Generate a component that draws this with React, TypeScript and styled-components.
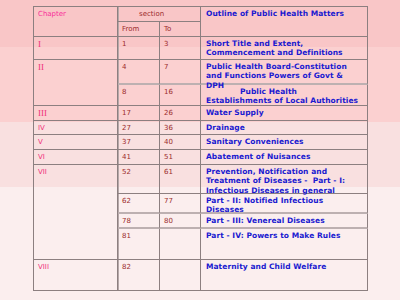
import React from "react";
import styled, { createGlobalStyle } from "styled-components";

const GlobalStyle = createGlobalStyle`
	html, body {
		margin: 0;
		padding: 0;
	}
	body {
		width: 400px;
		height: 300px;
		overflow: hidden;
		font-family: "DejaVu Sans", Verdana, sans-serif;
		background: linear-gradient(
			to bottom,
			#f9c6c7 0px,
			#f9c6c7 47px,
			#fbd0d0 47px,
			#fbd0d0 122px,
			#f9e0e0 122px,
			#f9e0e0 187px,
			#fbeeee 187px,
			#fbeeee 300px
		);
	}
`;

const Slide = styled.div`
	width: 400px;
	height: 300px;
	padding: 6px 0 0 33px;
	box-sizing: border-box;
`;

const Grid = styled.div`
	display: grid;
	grid-template-columns: 84px 42px 41px 167px;
	grid-template-rows: 15px 15px 23px 25px 21px 15px 14px 15px 15px 29px 20px 15px 31px 31px;
	border-top: 1px solid #8c7f80;
	border-left: 1px solid #8c7f80;
	width: max-content;
`;

const Cell = styled.div<{ $soft?: boolean; $thickLeft?: boolean }>`
	box-sizing: border-box;
	border-right: 1px solid #8c7f80;
	border-bottom: ${(p) => (p.$soft ? "2px solid #bdb0b1" : "1px solid #8c7f80")};
	${(p) => (p.$thickLeft ? "box-shadow: inset 1px 0 0 #b5a8a9;" : "")}
	padding: 3px 0 0 4px;
	font-size: 7px;
	line-height: 9px;
	white-space: nowrap;
	overflow: visible;
`;

const HeadCell = styled(Cell)<{ $pink?: boolean; $centered?: boolean }>`
	color: ${(p) => (p.$pink ? "#f8309a" : "#9c2c2c")};
	padding-left: ${(p) => (p.$centered ? "21px" : "4px")};
`;

const ChapterCell = styled(Cell)<{ $serif?: boolean }>`
	color: #f0307a;
	font-family: ${(p) =>
		p.$serif ? '"Liberation Serif", "Times New Roman", serif' : '"DejaVu Sans", Verdana, sans-serif'};
	font-size: ${(p) => (p.$serif ? "9px" : "7px")};
`;

const NumCell = styled(Cell)`
	color: #9c2c2c;
`;

const TitleCell = styled(Cell)<{ $indent?: number }>`
	color: #1a1ad0;
	font-weight: bold;
	font-size: 7.5px;
	line-height: 9.4px;
	padding-left: 5px;
	padding-top: 2px;
	letter-spacing: 0.05px;
	text-indent: ${(p) => (p.$indent ? `${p.$indent}px` : "0")};
`;

const span = (c1: number, c2: number, r1: number, r2: number) => ({
	gridColumn: `${c1} / ${c2}`,
	gridRow: `${r1} / ${r2}`,
});

const App: React.FC = () => {
	return (
		<Slide>
			<GlobalStyle />
			<Grid>
				{/* header */}
				<HeadCell $pink style={span(1, 2, 1, 3)}>Chapter</HeadCell>
				<HeadCell $centered style={span(2, 4, 1, 2)} $thickLeft>section</HeadCell>
				<TitleCell style={span(4, 5, 1, 3)}>Outline of Public Health Matters</TitleCell>
				<HeadCell style={span(2, 3, 2, 3)} $thickLeft>From</HeadCell>
				<HeadCell style={span(3, 4, 2, 3)}>To</HeadCell>

				{/* I */}
				<ChapterCell $serif style={span(1, 2, 3, 4)}>I</ChapterCell>
				<NumCell $thickLeft>1</NumCell>
				<NumCell>3</NumCell>
				<TitleCell>
					Short Title and Extent,
					<br />
					Commencement and Definitions
				</TitleCell>

				{/* II */}
				<ChapterCell $serif style={span(1, 2, 4, 6)}>II</ChapterCell>
				<NumCell $thickLeft $soft>4</NumCell>
				<NumCell $soft>7</NumCell>
				<TitleCell $soft>
					Public Health Board-Constitution
					<br />
					and Functions Powers of Govt &amp;
					<br />
					DPH
				</TitleCell>
				<NumCell $thickLeft style={span(2, 3, 5, 6)}>8</NumCell>
				<NumCell style={span(3, 4, 5, 6)}>16</NumCell>
				<TitleCell $indent={34} style={span(4, 5, 5, 6)}>
					Public Health
					<br />
					Establishments of Local Authorities
				</TitleCell>

				{/* III - VI */}
				<ChapterCell $serif>III</ChapterCell>
				<NumCell $thickLeft>17</NumCell>
				<NumCell>26</NumCell>
				<TitleCell>Water Supply</TitleCell>

				<ChapterCell>IV</ChapterCell>
				<NumCell $thickLeft>27</NumCell>
				<NumCell>36</NumCell>
				<TitleCell>Drainage</TitleCell>

				<ChapterCell>V</ChapterCell>
				<NumCell $thickLeft>37</NumCell>
				<NumCell>40</NumCell>
				<TitleCell>Sanitary Conveniences</TitleCell>

				<ChapterCell>VI</ChapterCell>
				<NumCell $thickLeft>41</NumCell>
				<NumCell>51</NumCell>
				<TitleCell>Abatement of Nuisances</TitleCell>

				{/* VII */}
				<ChapterCell style={span(1, 2, 10, 14)}>VII</ChapterCell>
				<NumCell $thickLeft>52</NumCell>
				<NumCell>61</NumCell>
				<TitleCell>
					Prevention, Notification and
					<br />
					Treatment of Diseases -&nbsp; Part - I:
					<br />
					Infectious Diseases in general
				</TitleCell>
				<NumCell $thickLeft style={span(2, 3, 11, 12)} $soft>62</NumCell>
				<NumCell style={span(3, 4, 11, 12)} $soft>77</NumCell>
				<TitleCell style={span(4, 5, 11, 12)} $soft>
					Part - II: Notified Infectious
					<br />
					Diseases
				</TitleCell>
				<NumCell $thickLeft style={span(2, 3, 12, 13)} $soft>78</NumCell>
				<NumCell style={span(3, 4, 12, 13)} $soft>80</NumCell>
				<TitleCell style={span(4, 5, 12, 13)} $soft>Part - III: Venereal Diseases</TitleCell>
				<NumCell $thickLeft style={span(2, 3, 13, 14)}>81</NumCell>
				<NumCell style={span(3, 4, 13, 14)} />
				<TitleCell style={span(4, 5, 13, 14)}>Part - IV: Powers to Make Rules</TitleCell>

				{/* VIII */}
				<ChapterCell>VIII</ChapterCell>
				<NumCell $thickLeft>82</NumCell>
				<NumCell />
				<TitleCell>Maternity and Child Welfare</TitleCell>
			</Grid>
		</Slide>
	);
};

export default App;
